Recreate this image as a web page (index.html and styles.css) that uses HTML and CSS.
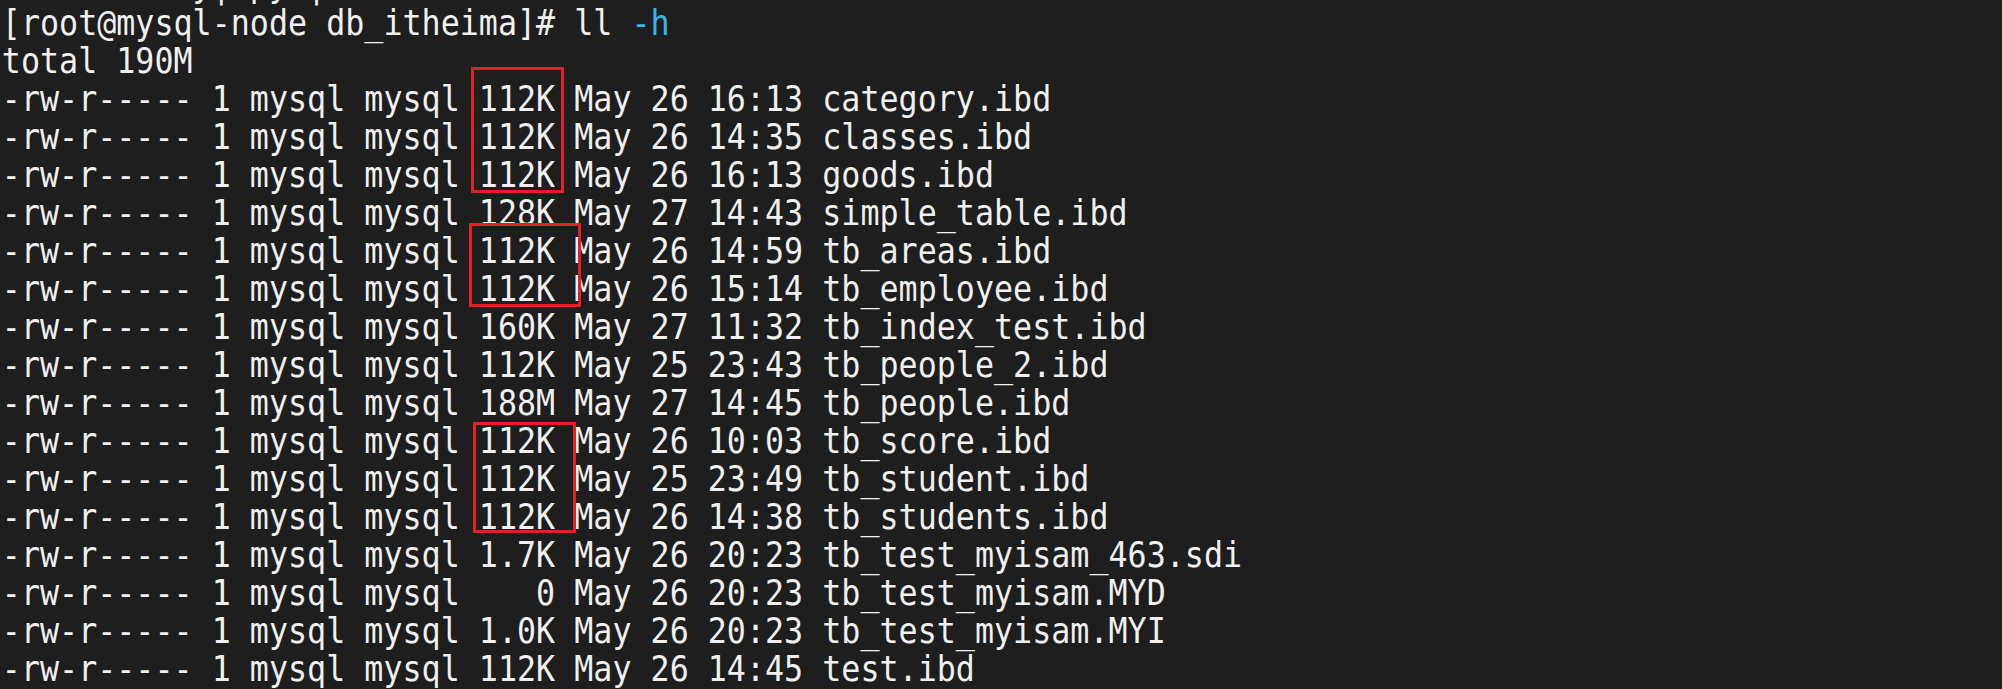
FILE: index.html
```html
<!DOCTYPE html>
<html>
<head>
<meta charset="utf-8">
<link rel="stylesheet" href="styles.css">
</head>
<body>
<div class="term">
<pre class="out">          y| py |
[root@mysql-node db_itheima]# ll <span class="opt">-h</span>
total 190M
-rw-r----- 1 mysql mysql 112K May 26 16:13 category.ibd
-rw-r----- 1 mysql mysql 112K May 26 14:35 classes.ibd
-rw-r----- 1 mysql mysql 112K May 26 16:13 goods.ibd
-rw-r----- 1 mysql mysql 128K May 27 14:43 simple_table.ibd
-rw-r----- 1 mysql mysql 112K May 26 14:59 tb_areas.ibd
-rw-r----- 1 mysql mysql 112K May 26 15:14 tb_employee.ibd
-rw-r----- 1 mysql mysql 160K May 27 11:32 tb_index_test.ibd
-rw-r----- 1 mysql mysql 112K May 25 23:43 tb_people_2.ibd
-rw-r----- 1 mysql mysql 188M May 27 14:45 tb_people.ibd
-rw-r----- 1 mysql mysql 112K May 26 10:03 tb_score.ibd
-rw-r----- 1 mysql mysql 112K May 25 23:49 tb_student.ibd
-rw-r----- 1 mysql mysql 112K May 26 14:38 tb_students.ibd
-rw-r----- 1 mysql mysql 1.7K May 26 20:23 tb_test_myisam_463.sdi
-rw-r----- 1 mysql mysql    0 May 26 20:23 tb_test_myisam.MYD
-rw-r----- 1 mysql mysql 1.0K May 26 20:23 tb_test_myisam.MYI
-rw-r----- 1 mysql mysql 112K May 26 14:45 test.ibd</pre>
<div class="mark mark-a"></div>
<div class="mark mark-b"></div>
<div class="mark mark-c"></div>
</div>
</body>
</html>
```
FILE: styles.css
```css
html, body {
  margin: 0;
  padding: 0;
  background: #1e1e1e;
  overflow: hidden;
}
.term {
  position: relative;
  width: 2002px;
  height: 689px;
  overflow: hidden;
  background: #1e1e1e;
}
.out {
  margin: -34.3px 0 0 0;
  padding: 0 0 0 2px;
  font-family: "DejaVu Sans Mono", monospace;
  font-size: 35px;
  line-height: 38px;
  color: #f0f0f0;
  white-space: pre;
  transform: scaleX(0.9055);
  transform-origin: 0 0;
}
.opt {
  color: #3cb4e8;
}
.mark {
  position: absolute;
  border: 3px solid #e41e26;
  box-sizing: border-box;
}
.mark-a {
  left: 471px;
  top: 67px;
  width: 93px;
  height: 126px;
}
.mark-b {
  left: 469px;
  top: 223px;
  width: 112px;
  height: 84px;
}
.mark-c {
  left: 473px;
  top: 422px;
  width: 103px;
  height: 111px;
}
```
